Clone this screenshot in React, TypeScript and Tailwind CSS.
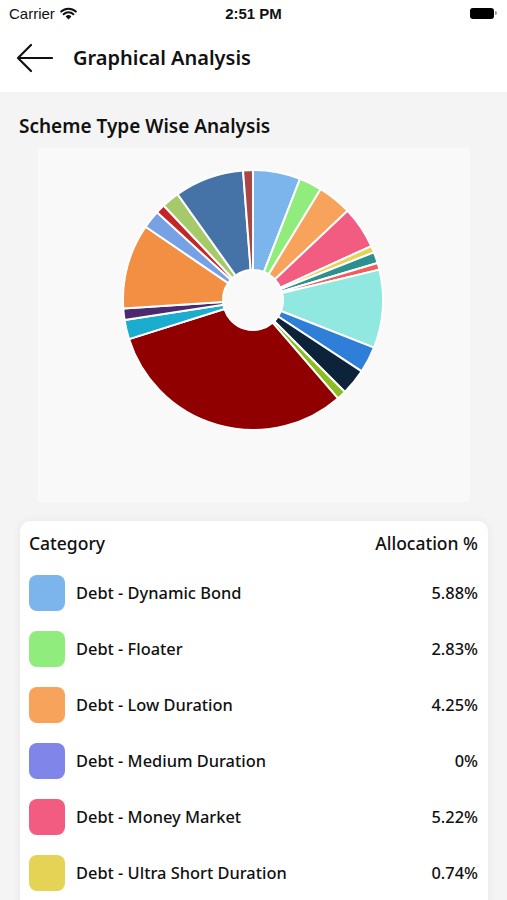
import React from "react";

type Slice = { color: string; start: number; end: number };

const slices: Slice[] = [
  { color: "#7cb5ec", start: 0, end: 21.2 },
  { color: "#90ed7d", start: 21.2, end: 31.4 },
  { color: "#f7a35c", start: 31.4, end: 46.7 },
  { color: "#f15c80", start: 46.7, end: 65.5 },
  { color: "#e4d354", start: 65.5, end: 68.5 },
  { color: "#2b908f", start: 68.5, end: 73.5 },
  { color: "#f45b5b", start: 73.5, end: 76.5 },
  { color: "#91e8e1", start: 76.5, end: 111.5 },
  { color: "#2f7ed8", start: 111.5, end: 123.3 },
  { color: "#0d233a", start: 123.3, end: 135 },
  { color: "#8bbc21", start: 135, end: 139.2 },
  { color: "#910000", start: 139.2, end: 252.5 },
  { color: "#1aadce", start: 252.5, end: 261.1 },
  { color: "#492970", start: 261.1, end: 266.3 },
  { color: "#f28f43", start: 266.3, end: 304.3 },
  { color: "#77a1e5", start: 304.3, end: 312.4 },
  { color: "#c42525", start: 312.4, end: 316.6 },
  { color: "#a6c96a", start: 316.6, end: 324.5 },
  { color: "#4572a7", start: 324.5, end: 355.6 },
  { color: "#aa4643", start: 355.6, end: 360 },
];

function pt(cx: number, cy: number, r: number, deg: number) {
  const a = (deg * Math.PI) / 180;
  return [cx + r * Math.sin(a), cy - r * Math.cos(a)];
}

function slicePath(cx: number, cy: number, ri: number, ro: number, s: number, e: number) {
  const [x1, y1] = pt(cx, cy, ro, s);
  const [x2, y2] = pt(cx, cy, ro, e);
  const [x3, y3] = pt(cx, cy, ri, e);
  const [x4, y4] = pt(cx, cy, ri, s);
  const large = e - s > 180 ? 1 : 0;
  return `M${x1} ${y1} A${ro} ${ro} 0 ${large} 1 ${x2} ${y2} L${x3} ${y3} A${ri} ${ri} 0 ${large} 0 ${x4} ${y4} Z`;
}

const rows = [
  { name: "Debt - Dynamic Bond", value: "5.88%", color: "#7cb5ec" },
  { name: "Debt - Floater", value: "2.83%", color: "#90ed7d" },
  { name: "Debt - Low Duration", value: "4.25%", color: "#f7a35c" },
  { name: "Debt - Medium Duration", value: "0%", color: "#8085e9" },
  { name: "Debt - Money Market", value: "5.22%", color: "#f15c80" },
  { name: "Debt - Ultra Short Duration", value: "0.74%", color: "#e4d354" },
];

export default function App() {
  const font = { fontFamily: "'Noto Sans', 'Open Sans', sans-serif" };
  return (
    <div className="w-[507px] h-[900px] overflow-hidden bg-[#f4f4f4] text-[#111]" style={font}>
      {/* Status + header */}
      <div className="bg-white h-[92px] flex flex-col">
        <div className="h-[26px] flex items-center justify-between px-[9px] relative">
          <div className="flex items-center gap-[5px] text-[15px] leading-none" style={{ fontFamily: "'Liberation Sans', Arial, sans-serif" }}>
            <span>Carrier</span>
            <svg width="17" height="13" viewBox="0 0 17 13">
              <path d="M8.5 12.5 L5.6 9.4 A4.2 4.2 0 0 1 11.4 9.4 Z" fill="#111" />
              <path d="M3.6 7.3 A7 7 0 0 1 13.4 7.3" stroke="#111" strokeWidth="2" fill="none" strokeLinecap="round" />
              <path d="M1.2 4.6 A10.6 10.6 0 0 1 15.8 4.6" stroke="#111" strokeWidth="2" fill="none" strokeLinecap="round" />
            </svg>
          </div>
          <div className="absolute left-1/2 -translate-x-1/2 text-[15px] font-bold leading-none" style={{ fontFamily: "'Liberation Sans', Arial, sans-serif" }}>
            2:51 PM
          </div>
          <div className="flex items-center mr-[1px]">
            <div className="w-[24px] h-[11px] rounded-[3px] bg-black" />
            <div className="w-[2px] h-[4px] bg-[#999] rounded-r-sm ml-[1px]" />
          </div>
        </div>
        <div className="flex-1 flex items-center pl-[16px] pb-[3px]">
          <svg width="37" height="30" viewBox="0 0 37 30">
            <path d="M36 15 H2 M15 2 L2 15 L15 28" stroke="#111" strokeWidth="2.2" fill="none" strokeLinecap="round" strokeLinejoin="round" />
          </svg>
          <span className="ml-[20px] text-[20px] font-semibold">Graphical Analysis</span>
        </div>
      </div>

      {/* Body */}
      <div className="pt-[20px]">
        <div className="px-[19px] text-[19px] font-semibold leading-[28px]">Scheme Type Wise Analysis</div>
        <div className="mt-[8px] mx-[38px] mr-[37px] h-[354px] bg-[#f9f9f9] rounded-[3px]">
          <svg width="432" height="354" viewBox="0 0 432 354">
            {slices.map((s, i) => (
              <path
                key={i}
                d={slicePath(215, 152, 30, 130, s.start, s.end)}
                fill={s.color}
                stroke="#fff"
                strokeWidth="2"
                strokeLinejoin="round"
              />
            ))}
          </svg>
        </div>

        <div className="mt-[19px] ml-[20px] mr-[19px] bg-white rounded-[10px] shadow-[0_0_8px_rgba(0,0,0,0.06)] pb-4">
          <div className="h-[44px] flex items-center justify-between pl-[9px] pr-[10px] text-[17.5px] font-medium">
            <span>Category</span>
            <span>Allocation %</span>
          </div>
          {rows.map((r) => (
            <div key={r.name} className="h-[56px] flex items-center pl-[9px] pr-[10px]">
              <div className="w-[36px] h-[36px] rounded-[8px] shrink-0" style={{ backgroundColor: r.color }} />
              <span className="ml-[11px] flex-1 text-[16.4px] font-medium">{r.name}</span>
              <span className="text-[16.4px] font-medium">{r.value}</span>
            </div>
          ))}
        </div>
      </div>
    </div>
  );
}
